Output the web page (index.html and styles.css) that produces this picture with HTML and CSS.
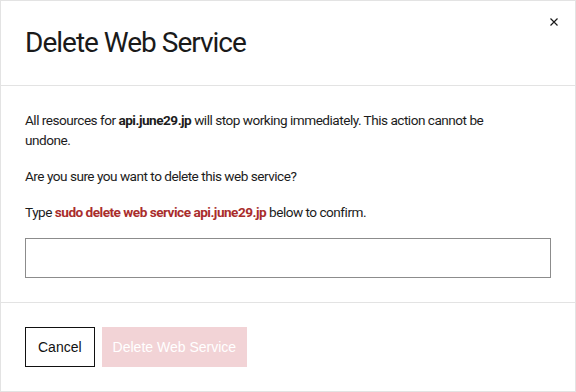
FILE: index.html
```html
<!DOCTYPE html>
<html lang="en">
<head>
<meta charset="utf-8">
<title>Delete Web Service</title>
<link rel="stylesheet" href="styles.css">
</head>
<body>
<div class="dialog">
  <header class="dialog-header">
    <h1 class="dialog-title">Delete Web Service</h1>
    <button class="close" aria-label="Close">
      <svg width="8" height="8" viewBox="0 0 8 8"><path d="M0.5 0.5L7.5 7.5M7.5 0.5L0.5 7.5" stroke="#1a1a1a" stroke-width="1.2" fill="none"/></svg>
    </button>
  </header>
  <section class="dialog-body">
    <p>All resources for <strong>api.june29.jp</strong> will stop working immediately. This action cannot be undone.</p>
    <p>Are you sure you want to delete this web service?</p>
    <p>Type <strong class="danger">sudo delete web service api.june29.jp</strong> below to confirm.</p>
    <input class="confirm-input" type="text" aria-label="Confirmation">
  </section>
  <footer class="dialog-footer">
    <button class="btn btn-cancel">Cancel</button>
    <button class="btn btn-delete" disabled>Delete Web Service</button>
  </footer>
</div>
</body>
</html>
```

FILE: styles.css
```css
* { box-sizing: border-box; }
html, body { margin: 0; padding: 0; background: #fff; }
body {
  font-family: Roboto, "Noto Sans", sans-serif;
  color: #1c1c1c;
  width: 576px;
  height: 392px;
}
.dialog {
  position: relative;
  width: 576px;
  height: 392px;
  border: 1px solid #e3e3e3;
  display: flex;
  flex-direction: column;
}
.dialog-header {
  padding: 24px;
  border-bottom: 1px solid #e3e3e3;
}
.dialog-title {
  margin: 0;
  font-size: 28px;
  line-height: 36px;
  font-weight: 400;
  letter-spacing: -1px;
  color: #1a1a1a;
}
.close {
  position: absolute;
  top: 12px;
  right: 12px;
  width: 18px;
  height: 18px;
  padding: 0;
  border: 0;
  background: transparent;
  display: flex;
  align-items: center;
  justify-content: center;
}
.dialog-body {
  padding: 24px;
  border-bottom: 1px solid #e3e3e3;
  font-size: 13.6px;
  line-height: 20px;
  letter-spacing: -0.5px;
}
.dialog-body p { margin: 0 0 16px; max-width: 490px; }
.dialog-body strong { font-weight: 700; }
.danger { color: #a92d2c; }
.confirm-input {
  display: block;
  width: 100%;
  height: 40px;
  margin: 0;
  border: 1px solid #8c8c8c;
  border-radius: 0;
  background: #fff;
  font: 14px Roboto, sans-serif;
}
.dialog-footer {
  padding: 24px;
  display: flex;
  gap: 7px;
}
.btn {
  height: 40px;
  font-family: "Liberation Sans", Arial, sans-serif;
  font-size: 14px;
  border-radius: 0;
}
.btn-cancel {
  background: #fff;
  border: 1px solid #111;
  color: #111;
  padding: 0 12px;
}
.btn-delete {
  background: #f2d3d6;
  border: 1px solid #f2d3d6;
  color: #fff;
  padding: 0 10px;
}
```
